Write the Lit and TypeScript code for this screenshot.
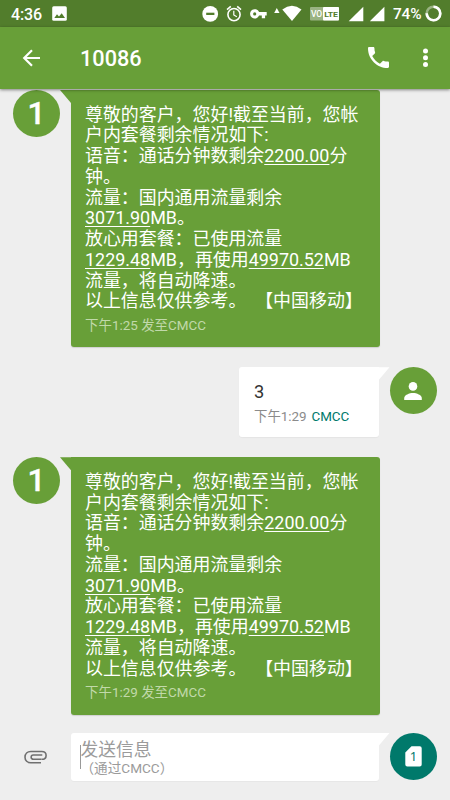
import { LitElement, html, css } from "lit";
import { customElement, property } from "lit/decorators.js";

const base = css`
  * { box-sizing: border-box; }
  svg { display: block; }
`;

@customElement("status-bar")
class StatusBar extends LitElement {
  static styles = [base, css`
    :host { display: flex; align-items: center; justify-content: space-between; height: 27px; padding: 0 8px 0 11px; background: #527d2c; color: #fff; font-size: 16px; letter-spacing: -0.15px; }
    .clock { font-weight: 500; line-height: 27px; padding-top: 1px; }
    .left { display: flex; align-items: center; gap: 10.5px; }
    .icons { width: 190px; height: 27px; flex: none; margin-right: 3px; }
    .right { display: flex; align-items: center; }
    .level { width: 28px; margin-right: 4px; line-height: 27px; padding-top: 2px; font-weight: 500; white-space: nowrap; font-size: 15.4px; }
    .lte { font: 700 8px Roboto, sans-serif; }
    .vo { font: 500 9px Roboto, sans-serif; }
  `];
  render() {
    return html`
      <div class="left">
        <span class="clock">4:36</span>
        <svg width="15" height="15" viewBox="0 0 15 15"><rect x=".2" y=".2" width="14.6" height="14.6" rx="1.5" fill="#fff"/><path d="M2.3 12 5 8.3l2 2.3 2.7-3.4L13 12z" fill="#527d2c"/></svg>
      </div>
      <div class="right">
        <svg class="icons" viewBox="200 0 190 27">
          <circle cx="210.2" cy="13.9" r="7.9" fill="#fff"/><rect x="206.2" y="12.7" width="8.2" height="2.3" fill="#527d2c"/>
          <g fill="none" stroke="#fff" stroke-width="1.6"><circle cx="234" cy="14.6" r="6.1"/><path d="M227 9.6l3.8-3.2M241 9.6l-3.8-3.2"/><path d="M233.8 10.8v4.2l3 1.8" stroke-width="1.2"/></g>
          <path fill="#fff" fill-rule="evenodd" d="M259.1 12.1h7.6v3.5h-1.6v2.7h-3.3v-2.7h-2.7a4.7 4.7 0 1 1 0-3.5zM254.7 12.3a1.6 1.6 0 1 0 0 3.2 1.6 1.6 0 0 0 0-3.2z"/>
          <path fill="#fff" d="M276.8 8.1l2.7 5h-5.3z"/>
          <path fill="#fff" d="M282.3 9.4Q292 2.2 301.5 9.4L292 21z"/>
          <rect x="310" y="7" width="29" height="13.5" rx="1" fill="#9ab383"/><rect x="323" y="7" width="16" height="13.5" rx="1" fill="#fff"/>
          <text class="vo" x="311" y="17" fill="#fff" textLength="11" lengthAdjust="spacingAndGlyphs">VO</text>
          <text class="lte" x="324.2" y="16.8" fill="#527d2c" textLength="13.5" lengthAdjust="spacingAndGlyphs">LTE</text>
          <path fill="#fff" d="M363.3 6.7v14.5h-14.6zM384.4 6.7v14.5h-14.6z"/>
        </svg>
        <span class="level">74%</span>
        <svg width="17" height="17" viewBox="0 0 17 17"><circle cx="8.5" cy="8.5" r="6.8" fill="none" stroke="#9ab383" stroke-width="2.6"/><path d="M8.5 1.7A6.8 6.8 0 1 1 1.7 8.3" fill="none" stroke="#fff" stroke-width="2.6"/></svg>
      </div>`;
  }
}

@customElement("tool-bar")
class ToolBar extends LitElement {
  static styles = [base, css`
    :host { display: flex; align-items: center; height: 62px; padding: 0 21px 0 22px; background: #689f38; color: #fff; box-shadow: 0 1px 3px rgba(0,0,0,.45); position: relative; z-index: 1; }
    .title { font-size: 21.7px; font-weight: 500; margin-left: 39px; flex: 1; padding-top: 1px; }
    .call { margin: 0 33px 2px 0; }
  `];
  render() {
    return html`
      <svg width="19" height="18" viewBox="0 0 19 18"><path d="M10 1.2 2.2 9l7.8 7.8M2.2 9H18" fill="none" stroke="#fff" stroke-width="2.2"/></svg>
      <span class="title">10086</span>
      <svg class="call" width="21" height="21" viewBox="3 3 18 18"><path fill="#fff" d="M6.62 10.79c1.44 2.83 3.76 5.14 6.59 6.59l2.2-2.2c.27-.27.67-.36 1.02-.24 1.12.37 2.33.57 3.57.57.55 0 1 .45 1 1V20c0 .55-.45 1-1 1-9.39 0-17-7.61-17-17 0-.55.45-1 1-1h3.5c.55 0 1 .45 1 1 0 1.25.2 2.45.57 3.57.11.35.03.74-.25 1.02l-2.2 2.2z"/></svg>
      <svg width="7" height="20" viewBox="0 0 7 20"><g fill="#fff"><circle cx="3.5" cy="3.1" r="2.5"/><circle cx="3.5" cy="9.8" r="2.5"/><circle cx="3.5" cy="16.4" r="2.5"/></g></svg>`;
  }
}

@customElement("incoming-message")
class IncomingMessage extends LitElement {
  @property() time = "";
  static styles = [base, css`
    :host { display: flex; height: 257.3px; padding-left: 13px; }
    .avatar { width: 47px; height: 47px; border-radius: 50%; background: #689f38; color: #fff; font-size: 31.5px; font-weight: 500; line-height: 48px; text-align: center; flex: none; -webkit-text-stroke: 0.4px #fff; }
    .tail { width: 11px; height: 13px; flex: none; background: #689f38; clip-path: polygon(0 0, 100% 0, 100% 100%); }
    .bubble { width: 309px; background: #689f38; color: #fff; border-radius: 0 3px 3px 3px; padding: 14.6px 0 0 14px; box-shadow: 0 1px 1px rgba(0,0,0,.13); }
    .line { height: 20.75px; line-height: 20.75px; font-size: 17.93px; white-space: pre; }
    .num { text-decoration: underline; text-decoration-thickness: 1px; text-underline-offset: 2px; }
    .meta { margin-top: 5px; font-size: 13.45px; line-height: 18px; color: #c1d9aa; white-space: pre; }
  `];
  render() {
    const n = (s: string) => html`<span class="num">${s}</span>`;
    const lines = [
      "尊敬的客户，您好!截至当前，您帐", "户内套餐剩余情况如下:",
      html`语音：通话分钟数剩余${n("2200.00")}分`, "钟。", "流量：国内通用流量剩余",
      html`${n("3071.90")}MB。`, "放心用套餐：已使用流量",
      html`${n("1229.48")}MB，再使用${n("49970.52")}MB`, "流量，将自动降速。",
      "以上信息仅供参考。  【中国移动】",
    ];
    return html`<div class="avatar">1</div><div class="tail"></div>
      <div class="bubble">${lines.map((l) => html`<div class="line">${l}</div>`)}
        <div class="meta">下午${this.time} 发至CMCC</div></div>`;
  }
}

@customElement("outgoing-message")
class OutgoingMessage extends LitElement {
  static styles = [base, css`
    :host { display: flex; justify-content: flex-end; height: 70px; padding-right: 13.5px; }
    .bubble { width: 140px; background: #fff; border-radius: 3px 0 3px 3px; padding: 13.7px 0 0 15.5px; box-shadow: 0 1px 1px rgba(0,0,0,.04); }
    .tail { width: 11px; height: 13px; background: #fff; clip-path: polygon(0 0, 100% 0, 0 100%); }
    .text { font-size: 18.3px; line-height: 22px; color: #333; }
    .meta { font-size: 13.4px; line-height: 18px; margin-top: 5px; color: #8b8b8b; white-space: pre; }
    .sim { color: #00796b; margin-left: 1.5px; }
    .avatar { width: 47px; height: 47px; border-radius: 50%; background: #689f38; display: grid; place-items: center; }
  `];
  render() {
    return html`<div class="bubble"><div class="text">3</div><div class="meta">下午1:29 <span class="sim">CMCC</span></div></div>
      <div class="tail"></div>
      <div class="avatar"><svg width="18" height="18" viewBox="0 0 18 18"><circle cx="9" cy="4.4" r="4.3" fill="#fff"/><path d="M.2 18v-2c0-3 5.2-5 8.8-5s8.8 2 8.8 5v2z" fill="#fff"/></svg></div>`;
  }
}

@customElement("compose-bar")
class ComposeBar extends LitElement {
  static styles = [base, css`
    :host { display: flex; height: 48px; padding-right: 13.5px; }
    .clip { width: 71px; padding: 17px 0 0 24px; }
    .field { flex: 1; background: #fff; border-radius: 3px 0 3px 3px; display: flex; align-items: flex-start; padding: 7px 0 0 8.5px; color: #9b9b9b; box-shadow: 0 1px 1px rgba(0,0,0,.03); }
    .caret { width: 1px; height: 24px; margin-top: 5px; background: #999; }
    .hint { font-size: 17.8px; line-height: 20px; white-space: nowrap; }
    .sub { font-size: 13.6px; line-height: 17px; }
    .tail { width: 11px; height: 13px; background: #fff; clip-path: polygon(0 0, 100% 0, 0 100%); }
    .send { width: 47px; height: 47px; border-radius: 50%; background: #00796b; display: grid; place-items: center; }
    .digit { font: 400 13px "Noto Sans", sans-serif; }
  `];
  render() {
    return html`<div class="clip"><svg width="23" height="14" viewBox="0 0 23 14"><path d="M17.5 9.3H9.3a2.1 2.1 0 0 1 0-4.3h9M17 12.8H6.8C3.4 12.8 1 10.4 1 7.2s2.4-5.7 5.8-5.7h11c2.5 0 4.3 1.6 4.3 3.9s-1.8 3.9-4.3 3.9" fill="none" stroke="#707070" stroke-width="1.6"/></svg></div>
      <div class="field"><div class="caret"></div><div class="hint">发送信息<div class="sub">（通过CMCC）</div></div></div>
      <div class="tail"></div>
      <div class="send"><svg width="17" height="21" viewBox="0 0 17 21"><path fill="#fff" d="M6.5.2h8.2a2 2 0 0 1 2 2v16.4a2 2 0 0 1-2 2H2.3a2 2 0 0 1-2-2V6.4z"/><text class="digit" x="8.5" y="15.3" text-anchor="middle" fill="#00796b">1</text></svg></div>`;
  }
}

@customElement("app-root")
class AppRoot extends LitElement {
  static styles = [base, css`
    :host { display: flex; flex-direction: column; height: 800px; background: #eee; overflow: hidden; font-family: Roboto, "Noto Sans CJK SC", sans-serif; }
    .thread { display: flex; flex-direction: column; gap: 20px; padding-top: 1px; }
    .compose { margin-top: 18.4px; }
  `];
  render() {
    return html`<status-bar></status-bar><tool-bar></tool-bar>
      <div class="thread"><incoming-message time="1:25"></incoming-message><outgoing-message></outgoing-message><incoming-message time="1:29"></incoming-message></div>
      <compose-bar class="compose"></compose-bar>`;
  }
}
